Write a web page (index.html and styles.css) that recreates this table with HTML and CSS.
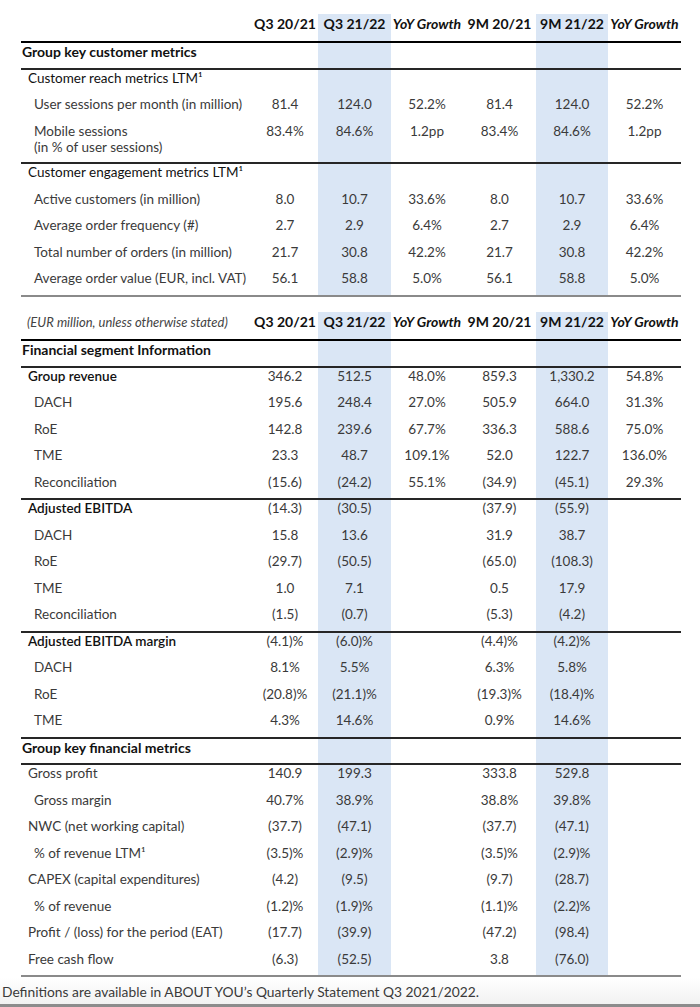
FILE: index.html
```html
<!DOCTYPE html>
<html>
<head>
<meta charset="utf-8">
<link rel="stylesheet" href="styles.css">
</head>
<body>
<div class="page">
  <div class="tbl t1">
    <div class="row hdr">
      <div></div>
      <div class="c">Q3 20/21</div>
      <div class="c b">Q3 21/22</div>
      <div class="c i">YoY Growth</div>
      <div class="c">9M 20/21</div>
      <div class="c b">9M 21/22</div>
      <div class="c i">YoY Growth</div>
    </div>
    <div class="row line">
      <div class="l0">Group key customer metrics</div>
      <div></div><div class="b"></div><div></div><div></div><div class="b"></div><div></div>
    </div>
    <div class="row">
      <div class="l1 dk">Customer reach metrics LTM¹</div>
      <div></div><div class="b"></div><div></div><div></div><div class="b"></div><div></div>
    </div>
    <div class="row">
      <div class="l2">User sessions per month (in million)</div>
      <div class="c">81.4</div><div class="c b">124.0</div><div class="c">52.2%</div><div class="c">81.4</div><div class="c b">124.0</div><div class="c">52.2%</div>
    </div>
    <div class="row line mobile">
      <div class="l2">Mobile sessions<br>(in % of user sessions)</div>
      <div class="c">83.4%</div><div class="c b">84.6%</div><div class="c">1.2pp</div><div class="c">83.4%</div><div class="c b">84.6%</div><div class="c">1.2pp</div>
    </div>
    <div class="row">
      <div class="l1 dk">Customer engagement metrics LTM¹</div>
      <div></div><div class="b"></div><div></div><div></div><div class="b"></div><div></div>
    </div>
    <div class="row">
      <div class="l2">Active customers (in million)</div>
      <div class="c">8.0</div><div class="c b">10.7</div><div class="c">33.6%</div><div class="c">8.0</div><div class="c b">10.7</div><div class="c">33.6%</div>
    </div>
    <div class="row">
      <div class="l2">Average order frequency (#)</div>
      <div class="c">2.7</div><div class="c b">2.9</div><div class="c">6.4%</div><div class="c">2.7</div><div class="c b">2.9</div><div class="c">6.4%</div>
    </div>
    <div class="row">
      <div class="l2">Total number of orders (in million)</div>
      <div class="c">21.7</div><div class="c b">30.8</div><div class="c">42.2%</div><div class="c">21.7</div><div class="c b">30.8</div><div class="c">42.2%</div>
    </div>
    <div class="row last">
      <div class="l2">Average order value (EUR, incl. VAT)</div>
      <div class="c">56.1</div><div class="c b">58.8</div><div class="c">5.0%</div><div class="c">56.1</div><div class="c b">58.8</div><div class="c">5.0%</div>
    </div>
  </div>

  <div class="tbl t2">
    <div class="row hdr">
      <div class="note">(EUR million, unless otherwise stated)</div>
      <div class="c">Q3 20/21</div>
      <div class="c b">Q3 21/22</div>
      <div class="c i">YoY Growth</div>
      <div class="c">9M 20/21</div>
      <div class="c b">9M 21/22</div>
      <div class="c i">YoY Growth</div>
    </div>
    <div class="row line">
      <div class="l0">Financial segment Information</div>
      <div></div><div class="b"></div><div></div><div></div><div class="b"></div><div></div>
    </div>
    <div class="row">
      <div class="l1 sb">Group revenue</div>
      <div class="c">346.2</div><div class="c b">512.5</div><div class="c">48.0%</div><div class="c">859.3</div><div class="c b">1,330.2</div><div class="c">54.8%</div>
    </div>
    <div class="row">
      <div class="l2">DACH</div>
      <div class="c">195.6</div><div class="c b">248.4</div><div class="c">27.0%</div><div class="c">505.9</div><div class="c b">664.0</div><div class="c">31.3%</div>
    </div>
    <div class="row">
      <div class="l2">RoE</div>
      <div class="c">142.8</div><div class="c b">239.6</div><div class="c">67.7%</div><div class="c">336.3</div><div class="c b">588.6</div><div class="c">75.0%</div>
    </div>
    <div class="row">
      <div class="l2">TME</div>
      <div class="c">23.3</div><div class="c b">48.7</div><div class="c">109.1%</div><div class="c">52.0</div><div class="c b">122.7</div><div class="c">136.0%</div>
    </div>
    <div class="row line">
      <div class="l2">Reconciliation</div>
      <div class="c">(15.6)</div><div class="c b">(24.2)</div><div class="c">55.1%</div><div class="c">(34.9)</div><div class="c b">(45.1)</div><div class="c">29.3%</div>
    </div>
    <div class="row">
      <div class="l1 sb">Adjusted EBITDA</div>
      <div class="c">(14.3)</div><div class="c b">(30.5)</div><div class="c"></div><div class="c">(37.9)</div><div class="c b">(55.9)</div><div class="c"></div>
    </div>
    <div class="row">
      <div class="l2">DACH</div>
      <div class="c">15.8</div><div class="c b">13.6</div><div class="c"></div><div class="c">31.9</div><div class="c b">38.7</div><div class="c"></div>
    </div>
    <div class="row">
      <div class="l2">RoE</div>
      <div class="c">(29.7)</div><div class="c b">(50.5)</div><div class="c"></div><div class="c">(65.0)</div><div class="c b">(108.3)</div><div class="c"></div>
    </div>
    <div class="row">
      <div class="l2">TME</div>
      <div class="c">1.0</div><div class="c b">7.1</div><div class="c"></div><div class="c">0.5</div><div class="c b">17.9</div><div class="c"></div>
    </div>
    <div class="row line">
      <div class="l2">Reconciliation</div>
      <div class="c">(1.5)</div><div class="c b">(0.7)</div><div class="c"></div><div class="c">(5.3)</div><div class="c b">(4.2)</div><div class="c"></div>
    </div>
    <div class="row">
      <div class="l1 sb">Adjusted EBITDA margin</div>
      <div class="c">(4.1)%</div><div class="c b">(6.0)%</div><div class="c"></div><div class="c">(4.4)%</div><div class="c b">(4.2)%</div><div class="c"></div>
    </div>
    <div class="row">
      <div class="l2">DACH</div>
      <div class="c">8.1%</div><div class="c b">5.5%</div><div class="c"></div><div class="c">6.3%</div><div class="c b">5.8%</div><div class="c"></div>
    </div>
    <div class="row">
      <div class="l2">RoE</div>
      <div class="c">(20.8)%</div><div class="c b">(21.1)%</div><div class="c"></div><div class="c">(19.3)%</div><div class="c b">(18.4)%</div><div class="c"></div>
    </div>
    <div class="row line">
      <div class="l2">TME</div>
      <div class="c">4.3%</div><div class="c b">14.6%</div><div class="c"></div><div class="c">0.9%</div><div class="c b">14.6%</div><div class="c"></div>
    </div>
    <div class="row line">
      <div class="l0">Group key financial metrics</div>
      <div></div><div class="b"></div><div></div><div></div><div class="b"></div><div></div>
    </div>
    <div class="row">
      <div class="l1">Gross profit</div>
      <div class="c">140.9</div><div class="c b">199.3</div><div class="c"></div><div class="c">333.8</div><div class="c b">529.8</div><div class="c"></div>
    </div>
    <div class="row">
      <div class="l2">Gross margin</div>
      <div class="c">40.7%</div><div class="c b">38.9%</div><div class="c"></div><div class="c">38.8%</div><div class="c b">39.8%</div><div class="c"></div>
    </div>
    <div class="row">
      <div class="l1">NWC (net working capital)</div>
      <div class="c">(37.7)</div><div class="c b">(47.1)</div><div class="c"></div><div class="c">(37.7)</div><div class="c b">(47.1)</div><div class="c"></div>
    </div>
    <div class="row">
      <div class="l2">% of revenue LTM¹</div>
      <div class="c">(3.5)%</div><div class="c b">(2.9)%</div><div class="c"></div><div class="c">(3.5)%</div><div class="c b">(2.9)%</div><div class="c"></div>
    </div>
    <div class="row">
      <div class="l1">CAPEX (capital expenditures)</div>
      <div class="c">(4.2)</div><div class="c b">(9.5)</div><div class="c"></div><div class="c">(9.7)</div><div class="c b">(28.7)</div><div class="c"></div>
    </div>
    <div class="row">
      <div class="l2">% of revenue</div>
      <div class="c">(1.2)%</div><div class="c b">(1.9)%</div><div class="c"></div><div class="c">(1.1)%</div><div class="c b">(2.2)%</div><div class="c"></div>
    </div>
    <div class="row">
      <div class="l1">Profit / (loss) for the period (EAT)</div>
      <div class="c">(17.7)</div><div class="c b">(39.9)</div><div class="c"></div><div class="c">(47.2)</div><div class="c b">(98.4)</div><div class="c"></div>
    </div>
    <div class="row last">
      <div class="l1">Free cash flow</div>
      <div class="c">(6.3)</div><div class="c b">(52.5)</div><div class="c"></div><div class="c">3.8</div><div class="c b">(76.0)</div><div class="c"></div>
    </div>
  </div>

  <div class="footer">Definitions are available in ABOUT YOU’s Quarterly Statement Q3 2021/2022.</div>
</div>
</body>
</html>
```

FILE: styles.css
```css
html, body {
  margin: 0;
  padding: 0;
  background: #ffffff;
}

.page {
  width: 700px;
  height: 1007px;
  overflow: hidden;
  font-family: Lato, "Open Sans", sans-serif;
  font-size: 13.5px;
  color: #3a3a3a;
  display: flex;
  flex-direction: column;
}

.tbl {
  margin-left: 21px;
  width: 660px;
}

.t1 {
  margin-top: 14px;
}

.t2 {
  margin-top: 15.5px;
}

.row {
  display: grid;
  grid-template-columns: 231px 66px 73px 72px 73px 72px 73px;
  height: 26.5px;
  box-sizing: border-box;
  line-height: 17px;
  white-space: nowrap;
}

.row.line {
  border-bottom: 2px solid #262626;
}

.row.last {
  border-bottom: 2px solid #8a8a8a;
}

.row.hdr {
  height: 29px;
  line-height: 20px;
  border-bottom: 2px solid #000;
  font-weight: 700;
  font-size: 14px;
  color: #111;
}

.row.mobile {
  height: 41.5px;
  line-height: 16px;
}

.c {
  text-align: center;
}

.b {
  background: #dae6f5;
}

.i {
  font-style: italic;
}

.l0 {
  padding-left: 1px;
  font-weight: 700;
  font-size: 14px;
  color: #111;
}

.l1 {
  padding-left: 7px;
}

.l2 {
  padding-left: 13px;
}

.dk {
  color: #111;
}

.sb {
  font-weight: 600;
  color: #111;
}

.row > .note {
  padding-left: 6px;
  font-weight: 400;
  font-style: italic;
  font-size: 13px;
  color: #444;
}

.footer {
  flex: 1;
  padding-left: 2px;
  display: flex;
  align-items: center;
  padding-top: 1px;
  font-size: 13.8px;
  background: linear-gradient(#ffffff, #f2f2f2);
  border-bottom: 3px solid #8c8c8c;
  box-sizing: border-box;
  color: #3a3a3a;
}
```
